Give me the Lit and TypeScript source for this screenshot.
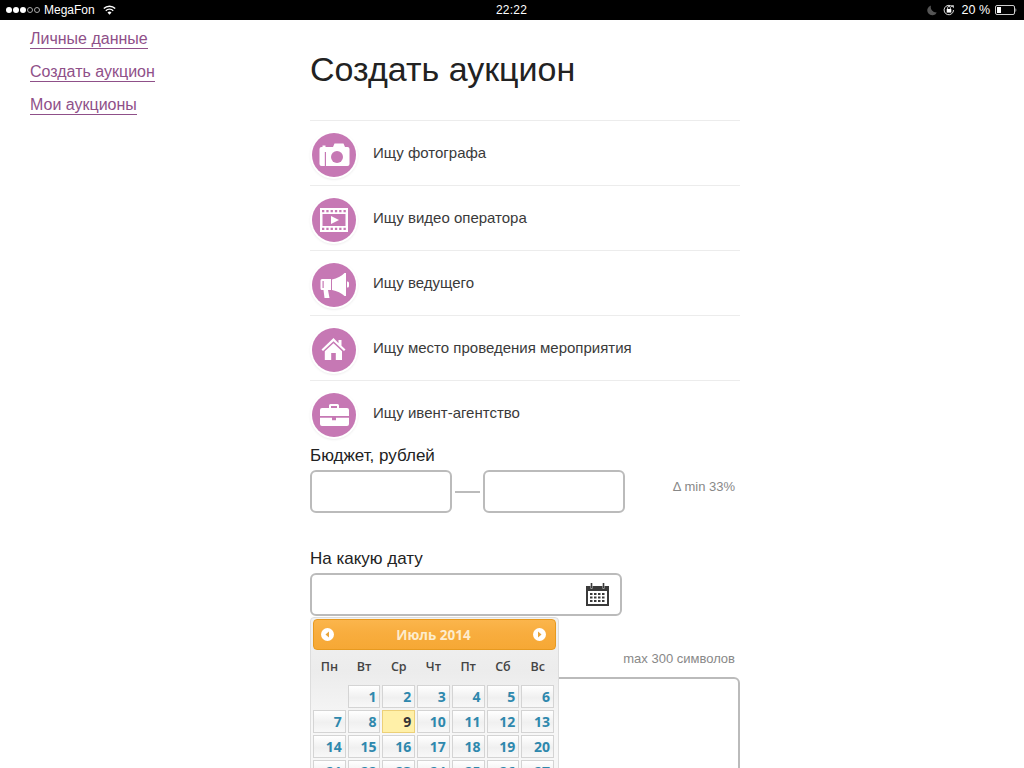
import { LitElement, html, css, svg } from "lit";
import { customElement } from "lit/decorators.js";

const icons = [
  svg`<path d="M21 14l1.500-3.500h9L33 14h2.500a2 2 0 0 1 2 2v15a2 2 0 0 1-2 2H9.500a2 2 0 0 1-2-2V16a2 2 0 0 1 2-2h1v-1.500h3V14z"/><rect x="12.800" y="19" width="1.200" height="14" fill="#c678b4"/><circle cx="25" cy="24" r="6" fill="#c678b4"/>`,
  svg`<path fill-rule="evenodd" d="M8 10h28v24H8zM10 12v2.300h2.300V12zM14.300 12v2.300h2.300V12zM18.600 12v2.300h2.300V12zM22.900 12v2.300h2.300V12zM27.200 12v2.300h2.300V12zM31.500 12v2.300h2.300V12zM10 29.700V32h2.300v-2.300zM14.300 29.700V32h2.300v-2.300zM18.600 29.700V32h2.300v-2.300zM22.900 29.700V32h2.300v-2.300zM27.200 29.700V32h2.300v-2.300zM31.500 29.700V32h2.300v-2.300zM10.500 16v12h23V16zM19 18l8 4l-8 4z"/>`,
  svg`<path fill-rule="evenodd" d="M10 16H19v11h-3l1.500 8h-5L11.500 27H10A1.500 1.500 0 0 1 8.500 25.500v-8A1.500 1.500 0 0 1 10 16zM10.500 18v7h1.200v-7z"/><path d="M20 16.500C25 15.500 29.500 13 32.500 10H34V33H32.500C29.500 30 25 28 20 27z"/><path d="M35 18.500h.5a1.500 1.500 0 0 1 1.500 1.500v3a1.500 1.500 0 0 1-1.500 1.500H35z"/>`,
  svg`<path d="M21.500 10L9.500 21.500l1.500 1.500L21.500 13.200 32 23l1.500-1.500-4-3.700V12h-3v3.200z"/><path d="M21.500 15.300L30 23.300V32h-6.200v-7h-4.600v7H12.800V23.300z"/>`,
  svg`<path fill-rule="evenodd" d="M17 12.500a1.500 1.500 0 0 1 1.500-1.500h7a1.500 1.500 0 0 1 1.500 1.500V15h8a2 2 0 0 1 2 2v6H8v-6a2 2 0 0 1 2-2h7zM19 13v2h6v-2z"/><path d="M8 24.700h12v2.500h4v-2.500h13V31a2 2 0 0 1-2 2H10a2 2 0 0 1-2-2z"/>`,
];
const rows = ["Ищу фотографа", "Ищу видео оператора", "Ищу ведущего", "Ищу место проведения мероприятия", "Ищу ивент-агентство"];
const days = ["Пн", "Вт", "Ср", "Чт", "Пт", "Сб", "Вс"];
const cells: (number | null)[] = [null];
for (let d = 1; d <= 31; d++) cells.push(d);

@customElement("app-root")
export class AppRoot extends LitElement {
  static styles = css`
    :host { display: block; width: 1024px; height: 768px; overflow: hidden; position: relative; background: #fff; font-family: "Liberation Sans", Arial, sans-serif; color: #222; }
    .status { height: 20px; background: #000; color: #fff; display: grid; grid-template-columns: 1fr auto 1fr; align-items: center; font-size: 12px; padding: 0 7px 0 6px; box-sizing: border-box; }
    .st-left { display: flex; align-items: center; }
    .dots { display: flex; gap: 1px; margin-right: 4px; }
    .dot { width: 6px; height: 6px; border-radius: 50%; background: #fff; box-sizing: border-box; }
    .dot.off { background: none; border: 1px solid #aaa; }
    .wifi { margin-left: 8px; }
    .time { font-size: 12px; letter-spacing: .2px; }
    .st-right { display: flex; align-items: center; justify-content: flex-end; }
    .st-right .pct { font-size: 12.500px; margin: 0 5px 0 7px; }
    .page { display: flex; }
    .side { width: 280px; margin-left: 30px; padding-top: 9px; display: flex; flex-direction: column; gap: 13px; align-items: flex-start; flex: none; }
    .side a { font-size: 16px; line-height: 19px; color: #8f5089; border-bottom: 1px solid #8f5089; text-decoration: none; display: block; }
    .main { width: 430px; flex: none; }
    h1 { font-size: 34px; line-height: 40px; font-weight: 400; margin: 29px 0 31px; color: #222; }
    .row { height: 65px; box-sizing: border-box; border-top: 1px solid #ececec; display: flex; align-items: center; font-size: 15px; color: #3a3a3a; }
    .row span { margin-bottom: 2px; }
    .circle { width: 44px; height: 44px; margin: 4px 17px 0 2px; border-radius: 50%; background: #c678b4; box-shadow: 0 0 0 2px #fff, 0 1px 3px 1px rgba(0,0,0,.14); flex: none; }
    .circle svg { display: block; fill: #fff; }
    .label { font-size: 17px; line-height: 20px; padding-top: 1px; color: #222; }
    .field { border: 2px solid #bbb; border-radius: 6px; height: 43px; box-sizing: border-box; background: #fff; }
    .budget { display: flex; align-items: center; margin-top: 4px; }
    .budget .field { width: 142px; }
    .dash { width: 25px; height: 2px; background: #bbb; margin: 0 3px; }
    .hint { font-size: 13px; color: #888; }
    .budget .hint { margin-left: auto; margin-right: 5px; position: relative; top: -5px; }
    .date-label { margin-top: 35px; }
    .date { position: relative; width: 312px; margin-top: 4px; }
    .date .field { display: flex; align-items: center; justify-content: flex-end; padding-right: 11px; }
    .date svg { display: block; fill: #3a3a3a; }
    .max { text-align: right; margin: 35px 5px 10px 0; line-height: 16px; }
    .area { height: 200px; }
    .picker { position: absolute; left: 0; top: 44px; width: 249px; height: 180px; box-sizing: border-box; padding: 1px 2px; background: linear-gradient(#f2f2f2, #ececec 30%, #f7f7f7 60%); border: 1px solid #ddd; border-radius: 4px 4px 0 0; font-family: "Open Sans", sans-serif; }
    .dp-head { height: 31px; width: 243px; box-sizing: border-box; display: flex; align-items: center; justify-content: space-between; padding: 0 9px 0 7px; border: 1px solid #e79a20; border-radius: 4px; background: linear-gradient(#fbb54c, #f8ad3e 45%, #f6a835); color: #fdeccd; font-size: 13.500px; font-weight: 700; }
    .dp-nav { width: 13px; height: 13px; border-radius: 50%; background: #fff; display: flex; align-items: center; justify-content: center; }
    .dp-nav svg { display: block; fill: #e8a53c; }
    .grid { display: grid; grid-template-columns: repeat(7, 1fr); gap: 2px; width: 241px; margin-left: 0; }
    .wd { height: 33px; display: flex; align-items: center; justify-content: center; font-size: 12.500px; font-weight: 600; color: #444; }
    .cell { height: 23px; box-sizing: border-box; border: 1px solid #d4d4d4; background: linear-gradient(#fff, #f0f0f0 55%, #f8f8f8); text-align: right; padding-right: 3px; font-size: 14px; line-height: 21px; font-weight: 700; color: #2e88ad; }
    .cell.today { background: #fff0a8; border-color: #ecd078; color: #363636; }
    .cell.empty { visibility: hidden; }
  `;

  render() {
    return html`
      <div class="status">
        <div class="st-left">
          <div class="dots">
            <span class="dot"></span><span class="dot"></span><span class="dot"></span><span class="dot off"></span><span class="dot off"></span>
          </div>
          <span>MegaFon</span>
          <svg class="wifi" width="13" height="10" viewBox="0 0 13 10" fill="none" stroke="#fff">
            <path stroke-width="1.400" d="M.8 3.600a8 8 0 0 1 11.400 0"/>
            <path stroke-width="1.400" d="M2.800 5.700a5.200 5.200 0 0 1 7.400 0"/>
            <path fill="#fff" stroke="none" d="M6.500 9.800L4.500 7.600a2.800 2.800 0 0 1 4 0z"/>
          </svg>
        </div>
        <div class="time">22:22</div>
        <div class="st-right">
          <svg width="10" height="11" viewBox="0 0 10 11" fill="#555"><path d="M4 .5a5 5 0 1 0 5.800 7A5.500 5.500 0 0 1 4 .5z"/></svg>
          <svg style="margin-left:6px" width="12" height="12" viewBox="0 0 12 12" fill="none" stroke="#ddd"><path d="M10.500 6a4.700 4.700 0 1 1-1.500-3.400"/><path fill="#ddd" stroke="none" d="M7.800 1.200h3v3z"/><rect x="3.700" y="5" width="4.600" height="3.600" fill="#fff" stroke="none"/><path stroke-width=".9" d="M4.600 5V3.800a1.400 1.400 0 0 1 2.800 0V5"/></svg>
          <span class="pct">20 %</span>
          <svg width="22" height="10" viewBox="0 0 22 10"><rect x=".5" y=".5" width="19" height="9" rx="1.500" fill="none" stroke="#ccc"/><rect x="2" y="2" width="4" height="6" fill="#fff"/><path d="M20.500 3.200c1 .2 1 3.400 0 3.600z" fill="#ccc"/></svg>
        </div>
      </div>
      <div class="page">
        <nav class="side">
          <a href="#">Личные данные</a>
          <a href="#">Создать аукцион</a>
          <a href="#">Мои аукционы</a>
        </nav>
        <div class="main">
          <h1>Создать аукцион</h1>
          ${rows.map((t, i) => html`
            <div class="row">
              <div class="circle"><svg width="44" height="44" viewBox="0 0 44 44">${icons[i]}</svg></div>
              <span>${t}</span>
            </div>`)}
          <div class="label">Бюджет, рублей</div>
          <div class="budget">
            <div class="field"></div>
            <div class="dash"></div>
            <div class="field"></div>
            <div class="hint">Δ min 33%</div>
          </div>
          <div class="label date-label">На какую дату</div>
          <div class="date">
            <div class="field">
              <svg width="23" height="23" viewBox="0 0 23 23"><path fill-rule="evenodd" d="M0 3h4.500v2.500h2V3h10v2.500h2V3H23v20H0zM2 8v13h19V8zM4 10h2.500v2H4zM8 10h2.500v2H8zM12 10h2.500v2H12zM16 10h2.500v2H16zM4 13.500h2.500v2H4zM8 13.500h2.500v2H8zM12 13.500h2.500v2H12zM16 13.500h2.500v2H16zM4 17h2.500v2H4zM8 17h2.500v2H8zM12 17h2.500v2H12zM16 17h2.500v2H16z"/><rect x="4.700" y="0" width="1.600" height="5"/><rect x="16.700" y="0" width="1.600" height="5"/></svg>
            </div>
            <div class="picker">
              <div class="dp-head">
                <span class="dp-nav"><svg width="7" height="7" viewBox="0 0 7 7"><path d="M5 .5v6L1.500 3.500z"/></svg></span>
                <span>Июль 2014</span>
                <span class="dp-nav"><svg width="7" height="7" viewBox="0 0 7 7"><path d="M2 .5v6L5.500 3.500z"/></svg></span>
              </div>
              <div class="grid">
                ${days.map((d) => html`<div class="wd">${d}</div>`)}
                ${cells.map((c) => html`<div class="cell ${c === null ? "empty" : ""} ${c === 9 ? "today" : ""}">${c}</div>`)}
              </div>
            </div>
          </div>
          <div class="hint max">max 300 символов</div>
          <div class="field area"></div>
        </div>
      </div>
    `;
  }
}
